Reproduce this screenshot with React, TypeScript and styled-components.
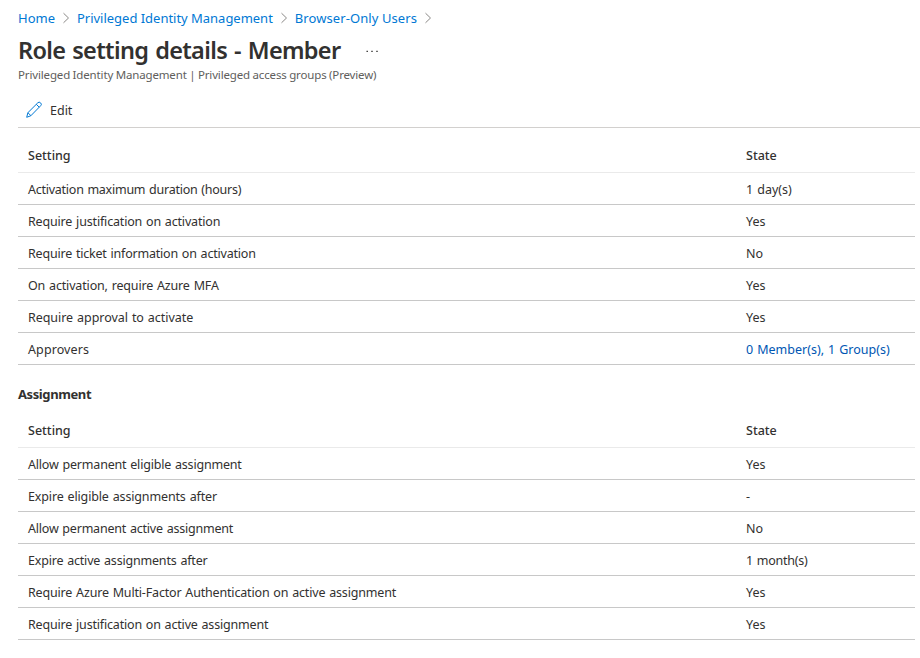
import React from "react";
import styled, { createGlobalStyle } from "styled-components";

const GlobalStyle = createGlobalStyle`
  * { box-sizing: border-box; }
  html, body { margin: 0; background: #fff; overflow: hidden; }
  body { font-family: "Segoe UI", "Noto Sans", sans-serif; font-size: 12.5px; color: #323130; }
`;

const Page = styled.main`
  display: flex;
  flex-direction: column;
  height: 658px;
  padding-left: 18px;
`;

const Breadcrumb = styled.nav`
  display: flex;
  align-items: center;
  height: 36px;
`;

const Crumb = styled.a<{ $spacing: number }>`
  color: #0078d4;
  font-size: 13px;
  line-height: 18px;
  white-space: nowrap;
  text-decoration: none;
  letter-spacing: ${(p) => p.$spacing}px;
`;

const Chevron = styled.svg`
  width: 22px;
  height: 12px;
  flex: none;
  fill: none;
  stroke: #8a8886;
`;

const TitleRow = styled.header`
  display: flex;
  align-items: center;
  height: 30px;
`;

const Title = styled.h1`
  margin: 0;
  width: 348px;
  font-size: 23.5px;
  font-weight: 600;
  line-height: 28px;
  padding-bottom: 2px;
  letter-spacing: -0.68px;
  word-spacing: 1.5px;
  white-space: nowrap;
`;

const More = styled.svg`
  width: 12px;
  height: 4px;
  fill: #323130;
`;

const Subtitle = styled.p`
  margin: 0;
  height: 18px;
  font-size: 11.5px;
  line-height: 18px;
  letter-spacing: -0.15px;
  word-spacing: -0.3px;
  color: #605e5c;
  white-space: nowrap;
`;

const Toolbar = styled.div`
  display: flex;
  align-items: center;
  height: 44px;
  padding-top: 8px;
  border-bottom: 1px solid #d2d0ce;
`;

const EditButton = styled.button`
  display: flex;
  align-items: center;
  gap: 8px;
  padding: 0 8px;
  border: 0;
  background: none;
  font: inherit;
  color: inherit;
`;

const Table = styled.div`
  width: 897px;
`;

const Row = styled.div<{ $head?: boolean }>`
  display: grid;
  grid-template-columns: 718px 1fr;
  align-items: center;
  height: ${(p) => (p.$head ? 34 : 32)}px;
  padding-left: 10px;
  padding-bottom: ${(p) => (p.$head ? 1 : 0)}px;
  border-bottom: 1px solid ${(p) => (p.$head ? "#eaeaea" : "#c8c8c8")};
  font-weight: ${(p) => (p.$head ? 500 : 400)};
`;

const Cell = styled.span<{ $spacing?: number; $link?: boolean }>`
  white-space: nowrap;
  line-height: 18px;
  padding-top: 2px;
  letter-spacing: ${(p) => p.$spacing ?? 0}px;
  word-spacing: 0.8px;
  color: ${(p) => (p.$link ? "#0056b3" : "inherit")};
`;

const TopGap = styled.div`
  height: 11px;
`;

const SectionTitle = styled.h2`
  margin: 20px 0 11px;
  font-size: 13px;
  font-weight: 700;
  line-height: 18px;
  letter-spacing: -0.4px;
`;

type Setting = { name: string; state: string; nameSpacing?: number; stateSpacing?: number; link?: boolean };

const activation: Setting[] = [
  { name: "Activation maximum duration (hours)", nameSpacing: -0.25, state: "1 day(s)" },
  { name: "Require justification on activation", nameSpacing: -0.17, state: "Yes" },
  { name: "Require ticket information on activation", nameSpacing: -0.2, state: "No" },
  { name: "On activation, require Azure MFA", nameSpacing: -0.16, state: "Yes" },
  { name: "Require approval to activate", nameSpacing: -0.05, state: "Yes" },
  { name: "Approvers", nameSpacing: 0.1, state: "0 Member(s), 1 Group(s)", link: true },
];

const assignment: Setting[] = [
  { name: "Allow permanent eligible assignment", nameSpacing: -0.19, state: "Yes" },
  { name: "Expire eligible assignments after", nameSpacing: -0.14, state: "-" },
  { name: "Allow permanent active assignment", nameSpacing: -0.21, state: "No" },
  { name: "Expire active assignments after", nameSpacing: -0.19, state: "1 month(s)", stateSpacing: -0.25 },
  { name: "Require Azure Multi-Factor Authentication on active assignment", nameSpacing: -0.17, state: "Yes" },
  { name: "Require justification on active assignment", nameSpacing: -0.18, state: "Yes" },
];

const Separator = () => (
  <Chevron viewBox="0 0 22 12">
    <path d="M8.500 1.200 13.500 6l-5 4.800" />
  </Chevron>
);

const SettingsTable = ({ rows }: { rows: Setting[] }) => (
  <Table>
    <Row $head>
      <Cell>Setting</Cell>
      <Cell>State</Cell>
    </Row>
    {rows.map((r) => (
      <Row key={r.name}>
        <Cell $spacing={r.nameSpacing}>{r.name}</Cell>
        <Cell $spacing={r.stateSpacing} $link={r.link}>{r.state}</Cell>
      </Row>
    ))}
  </Table>
);

export default function App() {
  return (
    <>
      <GlobalStyle />
      <Page>
        <Breadcrumb>
          <Crumb $spacing={0}>Home</Crumb>
          <Separator />
          <Crumb $spacing={-0.02}>Privileged Identity Management</Crumb>
          <Separator />
          <Crumb $spacing={0.08}>Browser-Only Users</Crumb>
          <Separator />
        </Breadcrumb>
        <TitleRow>
          <Title>Role setting details - Member</Title>
          <More viewBox="0 0 12 4">
            <path d="M.5 1.700h1.400v1.300H.5zM5.300 1.700h1.400v1.300H5.300zM10.300 1.700h1.400v1.300h-1.400z" />
          </More>
        </TitleRow>
        <Subtitle>Privileged Identity Management | Privileged access groups (Preview)</Subtitle>
        <Toolbar>
          <EditButton>
            <svg width="16" height="18" viewBox="0 0 16 18" fill="none" stroke="#0078d4">
              <path d="M.7 16.300 1.900 11.700 11.800 1.800a1.900 1.900 0 0 1 2.700 0l.2.2a1.900 1.900 0 0 1 0 2.700L4.900 14.700ZM10.300 3.300l2.900 2.900M1.900 11.700l3 3" />
            </svg>
            <Cell>Edit</Cell>
          </EditButton>
        </Toolbar>
        <TopGap />
        <SettingsTable rows={activation} />
        <SectionTitle>Assignment</SectionTitle>
        <SettingsTable rows={assignment} />
      </Page>
    </>
  );
}
